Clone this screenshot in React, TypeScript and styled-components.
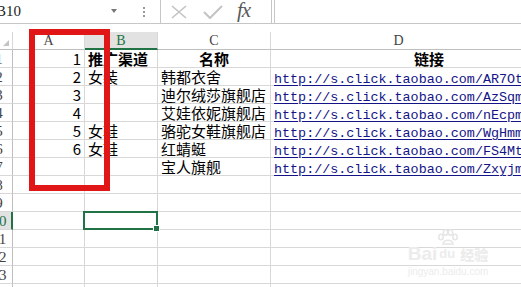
import React from 'react';
import styled, { createGlobalStyle, css } from 'styled-components';

const GlobalStyle = createGlobalStyle`
  html, body {
    margin: 0;
    padding: 0;
    background: #ffffff;
    overflow: hidden;
  }
  body {
    font-family: "Noto Sans CJK SC", "Liberation Sans", sans-serif;
  }
`;

const GREEN = '#217346';
const GRID = '#d8d8d8';

const Page = styled.div`
  position: relative;
  width: 521px;
  height: 287px;
  overflow: hidden;
  background: #fff;
`;

const FormulaBar = styled.div`
  display: flex;
  align-items: stretch;
  height: 23px;
  border-bottom: 1px solid #c6c6c6;
`;

const NameBox = styled.div`
  display: flex;
  align-items: center;
  justify-content: space-between;
  width: 121px;
  margin-left: -6px;
  padding: 0 9px 0 2px;
  font-family: "Liberation Serif", serif;
  font-size: 15px;
  color: #222;
  overflow: hidden;
`;

const DropArrow = styled.span`
  width: 0;
  height: 0;
  border-left: 3px solid transparent;
  border-right: 3px solid transparent;
  border-top: 4px solid #777;
  margin-top: -2px;
`;

const Grip = styled.div`
  width: 32px;
  display: flex;
  flex-direction: column;
  align-items: center;
  justify-content: center;
  gap: 2px;
  margin-left: 2px;
  span {
    width: 2px;
    height: 2px;
    background: #9a9a9a;
  }
`;

const Buttons = styled.div`
  display: flex;
  align-items: center;
  width: 112px;
  padding-left: 10px;
  gap: 16px;
  border-left: 1px solid #c6c6c6;
  border-right: 1px solid #c6c6c6;
  box-sizing: border-box;
`;

const Fx = styled.span`
  font-family: "Liberation Serif", serif;
  font-style: italic;
  font-size: 21px;
  color: #5a5a5a;
  letter-spacing: -1px;
  margin-left: -2px;
  margin-top: -3px;
`;

const FormulaInput = styled.div`
  flex: 1;
  margin-left: 2px;
  border-left: 1px solid #c6c6c6;
`;

const Sheet = styled.div`
  display: grid;
  grid-template-columns: 13px 72px 73px 113px 1fr;
  grid-auto-rows: 18px;
  margin-top: 8px;
`;

const Cell = styled.div<{ $align?: 'left' | 'right' | 'center'; $bold?: boolean; $selected?: boolean }>`
  position: relative;
  box-sizing: border-box;
  border-right: 1px solid ${GRID};
  border-bottom: 1px solid ${GRID};
  font-size: 15px;
  line-height: 18px;
  color: #000;
  white-space: nowrap;
  overflow: visible;
  padding: 0 3px;
  text-align: ${(p) => p.$align || 'left'};
  font-weight: ${(p) => (p.$bold ? 700 : 400)};
  ${(p) =>
    p.$selected &&
    css`
      &::after {
        content: '';
        position: absolute;
        left: -2px;
        top: -1px;
        right: -1px;
        bottom: -1px;
        border: 2px solid ${GREEN};
        z-index: 2;
      }
      &::before {
        content: '';
        position: absolute;
        right: -3px;
        bottom: -3px;
        width: 5px;
        height: 5px;
        background: ${GREEN};
        border: 1px solid #fff;
        z-index: 3;
      }
    `}
`;

const ColHead = styled.div<{ $active?: boolean }>`
  box-sizing: border-box;
  border-right: 1px solid ${GRID};
  border-bottom: ${(p) => (p.$active ? `2px solid ${GREEN}` : '1px solid #bfbfbf')};
  background: ${(p) => (p.$active ? '#e2e2e2' : '#fff')};
  color: ${(p) => (p.$active ? GREEN : '#444')};
  font-family: "Liberation Serif", serif;
  font-size: 14px;
  line-height: 17px;
  text-align: center;
`;

const Corner = styled.div`
  box-sizing: border-box;
  border-right: 1px solid ${GRID};
  border-bottom: 1px solid #bfbfbf;
  display: flex;
  align-items: flex-end;
  justify-content: flex-end;
  padding: 0 3px 3px 0;
  &::after {
    content: '';
    width: 0;
    height: 0;
    border-left: 6px solid transparent;
    border-bottom: 6px solid #c4c4c4;
  }
`;

const RowHead = styled.div<{ $active?: boolean }>`
  box-sizing: border-box;
  border-right: ${(p) => (p.$active ? `2px solid ${GREEN}` : '1px solid #bfbfbf')};
  border-bottom: 1px solid ${GRID};
  background: ${(p) => (p.$active ? '#e2e2e2' : '#fff')};
  color: ${(p) => (p.$active ? GREEN : '#444')};
  overflow: hidden;
  font-family: "Liberation Serif", serif;
  font-size: 15px;
  line-height: 18px;
  span {
    display: block;
    width: 26px;
    margin-left: -14px;
    text-align: center;
  }
`;

const Link = styled.span`
  font-family: "Liberation Mono", monospace;
  font-size: 13.4px;
  color: #141488;
  text-decoration: underline;
  text-underline-offset: 2px;
`;

const Highlight = styled.div`
  position: absolute;
  left: 29px;
  top: 29px;
  width: 81px;
  height: 162px;
  box-sizing: border-box;
  border: 6px solid #e11616;
  z-index: 5;
`;

const Watermark = styled.div`
  position: absolute;
  left: 398px;
  top: 229px;
  width: 100px;
  color: #ececec;
  display: flex;
  flex-direction: column;
  align-items: center;
  pointer-events: none;
  z-index: 4;
`;

const MarkLine = styled.div`
  display: flex;
  align-items: flex-end;
  gap: 2px;
  font-family: "Liberation Sans", sans-serif;
  font-weight: 700;
  font-size: 19px;
  line-height: 18px;
  b {
    font-family: "Noto Sans CJK SC", sans-serif;
    font-size: 14px;
    margin-left: 3px;
  }
`;

const MarkUrl = styled.div`
  font-family: "Liberation Sans", sans-serif;
  font-size: 10px;
  margin-top: 3px;
`;

const rows: [string, string, string, string][] = [
  ['1', '推广渠道', '名称', '链接'],
  ['2', '女装', '韩都衣舍', 'http://s.click.taobao.com/AR7Ot'],
  ['3', '', '迪尔绒莎旗舰店', 'http://s.click.taobao.com/AzSqm'],
  ['4', '', '艾娃依妮旗舰店', 'http://s.click.taobao.com/nEcpm'],
  ['5', '女鞋', '骆驼女鞋旗舰店', 'http://s.click.taobao.com/WgHmm'],
  ['6', '女鞋', '红蜻蜓', 'http://s.click.taobao.com/FS4Mt'],
  ['', '', '宝人旗舰', 'http://s.click.taobao.com/Zxyjm'],
  ['', '', '', ''],
  ['', '', '', ''],
  ['', '', '', ''],
  ['', '', '', ''],
  ['', '', '', ''],
  ['', '', '', ''],
  ['', '', '', ''],
];

const Cross = () => (
  <svg width="16" height="14" viewBox="0 0 16 14">
    <path d="M1 1 L15 13 M15 1 L1 13" stroke="#c3c3c3" strokeWidth="1.6" fill="none" />
  </svg>
);

const Tick = () => (
  <svg width="20" height="14" viewBox="0 0 20 14">
    <path d="M1 7 L7 13 L19 1" stroke="#c3c3c3" strokeWidth="2" fill="none" />
  </svg>
);

const Paw = () => (
  <svg width="22" height="16" viewBox="0 0 22 16">
    <g fill="none" stroke="#e6e6e6" strokeWidth="1.6">
      <ellipse cx="4" cy="8" rx="2.2" ry="2.8" />
      <ellipse cx="8.5" cy="3.5" rx="2.2" ry="2.8" />
      <ellipse cx="13.5" cy="3.5" rx="2.2" ry="2.8" />
      <ellipse cx="18" cy="8" rx="2.2" ry="2.8" />
      <path d="M6 15 C7 10 15 10 16 15 Z" />
    </g>
  </svg>
);

export default function App() {
  return (
    <Page>
      <GlobalStyle />
      <FormulaBar>
        <NameBox>
          <span>B10</span>
          <DropArrow />
        </NameBox>
        <Grip>
          <span />
          <span />
          <span />
        </Grip>
        <Buttons>
          <Cross />
          <Tick />
          <Fx>fx</Fx>
        </Buttons>
        <FormulaInput />
      </FormulaBar>

      <Sheet>
        <Corner />
        <ColHead>A</ColHead>
        <ColHead $active>B</ColHead>
        <ColHead>C</ColHead>
        <ColHead>D</ColHead>
        {rows.map((r, i) => {
          const n = i + 1;
          const head = i === 0;
          return (
            <React.Fragment key={n}>
              <RowHead $active={n === 10}>
                <span>{n}</span>
              </RowHead>
              <Cell $align="right">{r[0]}</Cell>
              <Cell $bold={head} $selected={n === 10}>
                {r[1]}
              </Cell>
              <Cell $bold={head} $align={head ? 'center' : 'left'}>
                {r[2]}
              </Cell>
              <Cell $bold={head} $align="left" style={head ? { paddingLeft: 143 } : undefined}>
                {head ? r[3] : r[3] && <Link>{r[3]}</Link>}
              </Cell>
            </React.Fragment>
          );
        })}
      </Sheet>

      <Highlight />

      <Watermark>
        <Paw />
        <MarkLine>
          Bai<span style={{ fontSize: 13 }}>du</span>
          <b>经验</b>
        </MarkLine>
        <MarkUrl>jingyan.baidu.com</MarkUrl>
      </Watermark>
    </Page>
  );
}
